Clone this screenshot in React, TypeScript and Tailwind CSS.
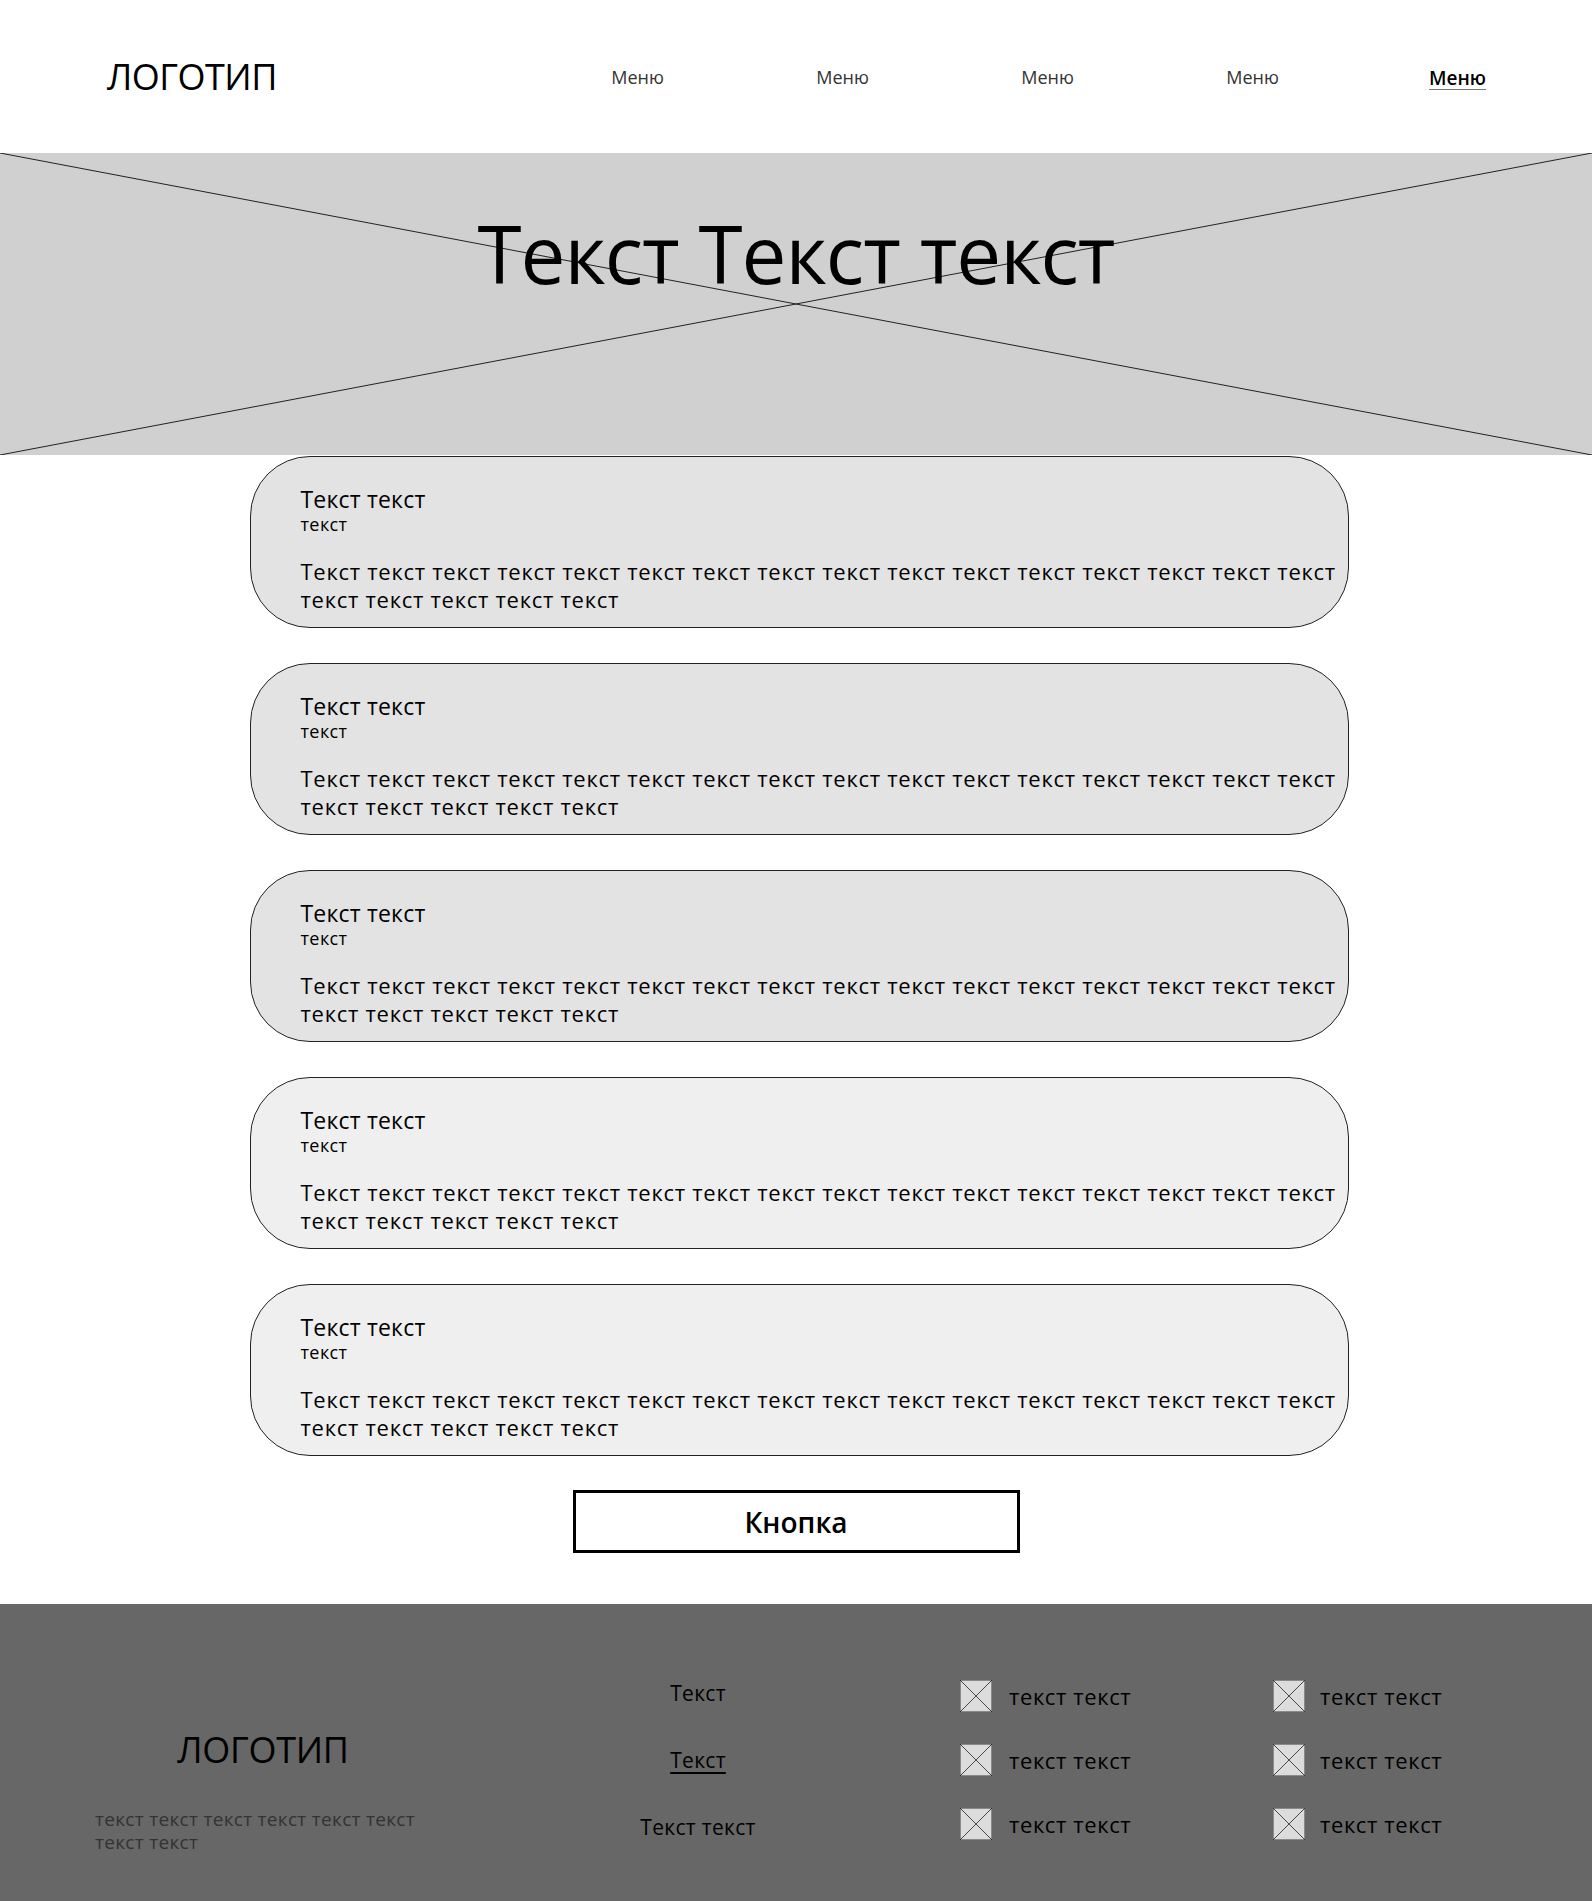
import React from "react";

const menu = ["Меню", "Меню", "Меню", "Меню", "Меню"];

const line1 =
  "Текст текст текст текст текст текст текст текст текст текст текст текст текст текст текст текст";
const line2 = "текст текст текст текст текст";

const cards = [
  "bg-[#e3e3e3]",
  "bg-[#e3e3e3]",
  "bg-[#e3e3e3]",
  "bg-[#efefef]",
  "bg-[#efefef]",
];

function PlaceholderIcon() {
  return (
    <svg width="32" height="32" viewBox="0 0 32 32" className="shrink-0">
      <rect x="0.5" y="0.5" width="31" height="31" fill="#dcdcdc" stroke="#8a8a8a" />
      <line x1="0" y1="0" x2="32" y2="32" stroke="#222" strokeWidth="0.8" />
      <line x1="32" y1="0" x2="0" y2="32" stroke="#222" strokeWidth="0.8" />
    </svg>
  );
}

function Card({ bg }: { bg: string }) {
  return (
    <div
      className={`w-[1099px] rounded-[60px] border border-[#222] ${bg} pl-[50px] pr-[10px] pt-[29px] pb-[14px] text-black`}
    >
      <div className="text-[23px] leading-[27px] tracking-[0.2px]">Текст текст</div>
      <div className="text-[18px] leading-[22px] tracking-[0.4px]">текст</div>
      <div className="mt-[22px] text-[22px] leading-[28px] tracking-[0.72px]">
        <div className="whitespace-nowrap">{line1}</div>
        <div className="whitespace-nowrap">{line2}</div>
      </div>
    </div>
  );
}

export default function App() {
  return (
    <div
      className="w-[1592px] min-h-[1901px] bg-white"
      style={{ fontFamily: '"Open Sans", "Noto Sans", sans-serif' }}
    >
      <header className="flex h-[153px] items-center pl-[107px]">
        <div className="w-[428px] shrink-0 text-[36px] leading-none tracking-[-0.5px] text-black">ЛОГОТИП</div>
        <nav className="flex shrink-0 pt-[3px]">
          {menu.map((m, i) => (
            <div key={i} className="flex w-[205px] justify-center">
              <span
                className={
                  i === 4
                    ? "text-[19px] font-semibold text-black underline underline-offset-[4px] decoration-[#777]"
                    : "text-[18px] text-[#333]"
                }
              >
                {m}
              </span>
            </div>
          ))}
        </nav>
      </header>

      <section className="relative h-[302px] bg-[#d0d0d0]">
        <svg
          className="absolute inset-0 h-full w-full"
          viewBox="0 0 100 100"
          preserveAspectRatio="none"
        >
          <line x1="0" y1="0" x2="100" y2="100" stroke="#222" strokeWidth="1" vectorEffect="non-scaling-stroke" />
          <line x1="100" y1="0" x2="0" y2="100" stroke="#222" strokeWidth="1" vectorEffect="non-scaling-stroke" />
        </svg>
        <h1 className="relative pt-[50px] text-center text-[80px] leading-[100px] tracking-[-1px] text-black">
          Текст Текст текст
        </h1>
      </section>

      <main className="flex flex-col items-center">
        <div className="ml-[6px] mt-px flex flex-col gap-[35px]">
          {cards.map((bg, i) => (
            <Card key={i} bg={bg} />
          ))}
        </div>
        <button className="mt-[34px] mb-[51px] h-[63px] w-[447px] border-[3px] border-black bg-white text-[28px] font-semibold text-black">
          Кнопка
        </button>
      </main>

      <footer className="flex h-[297px] bg-[#676767] pl-[95px] text-black">
        <div className="w-[320px] pt-[124px]">
          <div className="pl-[16px] text-center text-[36px] leading-[44px] tracking-[-0.3px]">ЛОГОТИП</div>
          <div className="mt-[36px] text-[19px] leading-[23px] tracking-[0.3px] text-[#333]">
            текст текст текст текст текст текст
            <br />
            текст текст
          </div>
        </div>
        <div className="ml-[183px] flex w-[200px] flex-col items-center gap-[39px] pt-[75px] text-[21px] leading-[28px] tracking-[0.3px]">
          <span>Текст</span>
          <span className="underline underline-offset-[4px]">Текст</span>
          <span>Текст текст</span>
        </div>
        <div className="ml-[162px] flex w-[313px] flex-col gap-[32px] pt-[76px]">
          {[0, 1, 2].map((r) => (
            <div key={r} className="flex h-[32px] items-center gap-[17px] text-[22px] tracking-[0.6px]">
              <PlaceholderIcon />
              <span>текст текст</span>
            </div>
          ))}
        </div>
        <div className="flex flex-col gap-[32px] pt-[76px]">
          {[0, 1, 2].map((r) => (
            <div key={r} className="flex h-[32px] items-center gap-[15px] text-[22px] tracking-[0.6px]">
              <PlaceholderIcon />
              <span>текст текст</span>
            </div>
          ))}
        </div>
      </footer>
    </div>
  );
}
